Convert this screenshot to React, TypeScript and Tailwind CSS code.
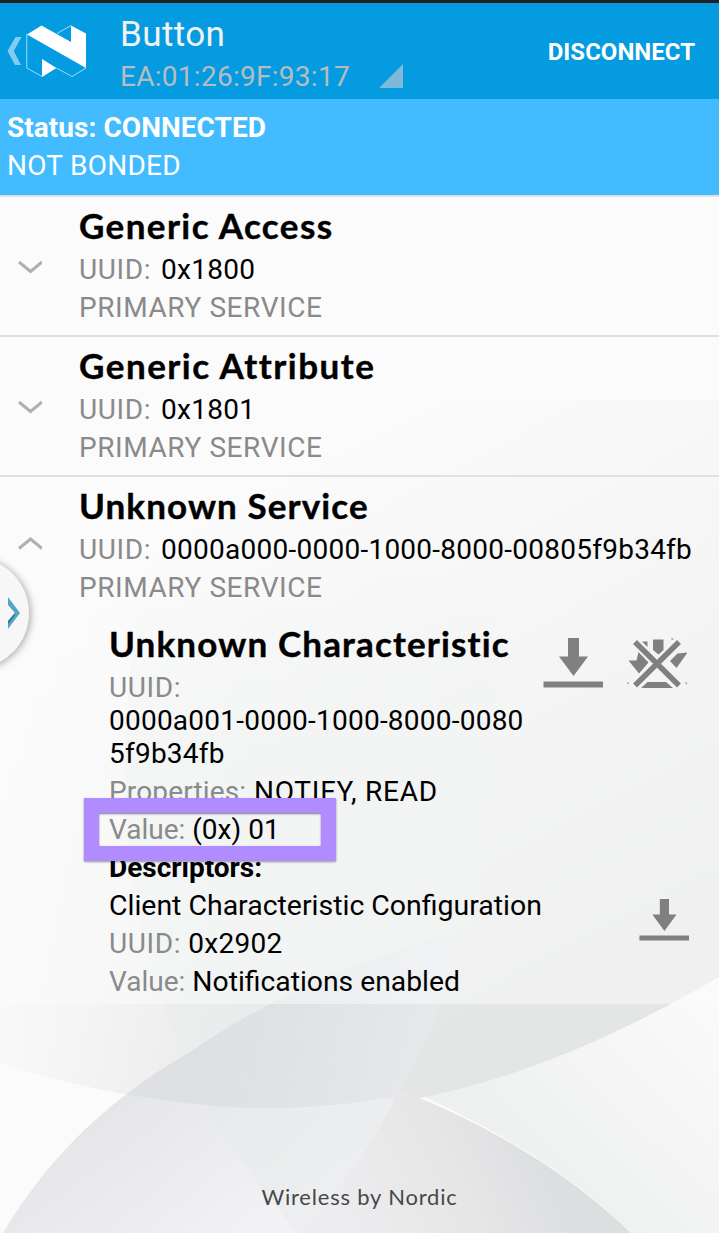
import React from "react";

const Download = ({ className }: { className: string }) => (
  <svg viewBox="0 0 60 50" className={className} fill="#808080" preserveAspectRatio="none">
    <path d="M25 0H36V18.500H45L30.500 38L16 18.500H25ZM0.500 43.500H60V49.500H0.500Z" />
  </svg>
);

const NotifyOff = () => (
  <svg viewBox="0 0 60 50" className="h-[50px] w-[60px]" fill="#808080">
    <path d="M26 1.500H36.500V12L31.500 16.500L26 12ZM11.500 14L21.500 24.500L12 35.500L1.500 22.500H9.500ZM43 23L50.500 15.500L60.500 14.500L49.500 30ZM15 3.500H20.500V9ZM44 0.500H47L45 2ZM14 50L20.500 44H39L46 50ZM0.500 44.500H2.500L0.500 46.500ZM58 44.500H60V46.500Z" />
    <path d="M8 4L52 47.500M52 4L8 47.500" stroke="#808080" strokeWidth="5.500" />
  </svg>
);

const Backdrop = () => (
  <svg className="absolute inset-0 h-[1233px] w-[719px]" viewBox="0 0 719 1233">
    <defs>
      <linearGradient id="sweep" gradientUnits="userSpaceOnUse" x1="320" y1="430" x2="600" y2="960">
        <stop offset="0" stopColor="#e4e5e6" stopOpacity="0" />
        <stop offset="0.45" stopColor="#e4e5e6" stopOpacity="0.5" />
        <stop offset="1" stopColor="#e4e5e5" />
      </linearGradient>
      <linearGradient id="leftLight" gradientUnits="userSpaceOnUse" x1="0" y1="0" x2="260" y2="0">
        <stop offset="0" stopColor="#fbfbfb" stopOpacity="0.85" />
        <stop offset="1" stopColor="#fbfbfb" stopOpacity="0" />
      </linearGradient>
      <linearGradient id="petal" gradientUnits="userSpaceOnUse" x1="0" y1="560" x2="0" y2="1233">
        <stop offset="0" stopColor="#e7eaea" stopOpacity="0" />
        <stop offset="0.3" stopColor="#e7eaea" stopOpacity="0.6" />
        <stop offset="1" stopColor="#edeeef" stopOpacity="0.6" />
      </linearGradient>
      <linearGradient id="dome" gradientUnits="userSpaceOnUse" x1="190" y1="1020" x2="420" y2="1080">
        <stop offset="0" stopColor="#d3d4d9" stopOpacity="0.55" />
        <stop offset="1" stopColor="#e6e8ec" stopOpacity="0.7" />
      </linearGradient>
      <linearGradient id="domeBase" gradientUnits="userSpaceOnUse" x1="140" y1="1080" x2="250" y2="1233">
        <stop offset="0" stopColor="#eeeff1" stopOpacity="0.1" />
        <stop offset="1" stopColor="#f2f2f4" />
      </linearGradient>
      <linearGradient id="hill" gradientUnits="userSpaceOnUse" x1="340" y1="1220" x2="530" y2="1130">
        <stop offset="0" stopColor="#ededef" />
        <stop offset="0.6" stopColor="#e6e6e7" />
        <stop offset="1" stopColor="#dddee0" />
      </linearGradient>
      <linearGradient id="corner" gradientUnits="userSpaceOnUse" x1="719" y1="980" x2="520" y2="1180">
        <stop offset="0" stopColor="#eeefef" stopOpacity="0" />
        <stop offset="1" stopColor="#eeefef" />
      </linearGradient>
    </defs>
    <rect width="719" height="1233" fill="#fbfbfb" />
    <path d="M719 977Q560 1070 425 1097Q560 1160 631 1233H719Z" fill="url(#corner)" />
    <path d="M0 400H719V977Q560 1070 425 1097Q340 1114 250 1108Q110 1100 0 1062Z" fill="url(#sweep)" />
    <path d="M0 477H260V1108Q110 1100 0 1062Z" fill="url(#leftLight)" />
    <path d="M150 540Q105 760 140 920Q170 1080 292 1233H305Q370 1150 400 1090Q470 960 490 830Q500 650 490 540Z" fill="url(#petal)" />
    <path d="M3 1233Q70 1120 190 1052Q300 975 464 930Q445 1015 400 1090Q360 1170 305 1233Z" fill="url(#dome)" />
    <path d="M135 1096Q260 1120 396 1097Q360 1170 305 1233H3Q60 1140 135 1096Z" fill="url(#domeBase)" />
    <path d="M210 1107Q310 1117 396 1097Q360 1170 298 1233Q240 1165 210 1107Z" fill="#e8ebeb" fillOpacity="0.6" />
    <path d="M298 1233Q360 1170 400 1090Q540 1145 631 1233Z" fill="url(#hill)" />
  </svg>
);

const Row = ({ title, tracking, uuid, up }: { title: string; tracking: string; uuid: string; up?: boolean }) => (
  <div className="flex h-[140px] border-t-2 border-[#e0e0e0] pt-2">
    <div className="w-[79px] shrink-0 pl-[18px]">
      <svg className={up ? "mt-[51px] h-3.5 w-6" : "mt-[55px] h-3.5 w-6"} viewBox="0 0 24 14" fill="none" stroke="#b0b0b0" strokeWidth="3">
        <path d={up ? "M1 12.500L12.500 3L24 12.500" : "M1 2L12.500 11.500L24 2"} />
      </svg>
    </div>
    <div className="whitespace-nowrap">
      <h2 className={`mb-1.5 font-[Lato] text-[35px] leading-10 font-bold [-webkit-text-stroke:0.4px_black] ${tracking}`}>{title}</h2>
      <p className="tracking-[0.25px]"><span className="mr-[10px] tracking-[0.6px] text-[#8a8a8a]">UUID:</span>{uuid}</p>
      <p className="tracking-[0.57px] text-[#8a8a8a]">PRIMARY SERVICE</p>
    </div>
  </div>
);

export default function App() {
  return (
    <div className="relative h-[1233px] w-[719px] overflow-hidden font-[Roboto] text-[28px] leading-[38px] text-black">
      <Backdrop />
      <div className="relative flex h-full flex-col">
        <header className="flex h-[99px] shrink-0 border-t-[3px] border-[#222] bg-[#059be0]">
          <svg className="mt-[22px] ml-[7px] h-[54px] w-[82px] shrink-0" viewBox="7 25 82 54">
            <path d="M15.500 37H21.500L13.800 51L21 65H15L7.500 51Z" fill="#80cdf0" />
            <path d="M27 34.500L41.500 25.500L71 42V25.500L86 33.500V68L27 34.500ZM42 59L56.500 68L42 77Z" fill="#fff" />
            <path d="M26.800 34V68L42 76.500M57 33.500L71 25.500M56.500 68L72 76.500L86 68" fill="none" stroke="#a0dcf7" strokeWidth="1" />
          </svg>
          <div className="ml-[31px] pt-[11px] whitespace-nowrap">
            <div className="text-[35px] leading-[42px] tracking-[0.4px] text-[#f2f2f2]">Button</div>
            <div className="flex text-[#b8bcbf]">
              <span className="w-[260px] pt-[2px] tracking-[0.28px]">EA:01:26:9F:93:17</span>
              <svg className="mt-2 h-6 w-6" viewBox="0 0 24 24"><path d="M23 0V24H-1Z" fill="#7fb9d7" /></svg>
            </div>
          </div>
          <div className="mr-6 ml-auto pt-[30px] text-[24px] font-bold text-white">DISCONNECT</div>
        </header>
        <div className="h-24 shrink-0 bg-[#42bbff] pt-[10px] pl-[7px] text-white">
          <div className="font-bold tracking-[0.05px]">Status: CONNECTED</div>
          <div className="tracking-[0.25px]">NOT BONDED</div>
        </div>
        <main className="h-[809px] shrink-0 bg-[#fcfcfc]/50">
          <Row title="Generic Access" tracking="tracking-[1.4px]" uuid="0x1800" />
          <Row title="Generic Attribute" tracking="tracking-[1.5px]" uuid="0x1801" />
          <Row title="Unknown Service" tracking="tracking-[1.1px]" uuid="0000a000-0000-1000-8000-00805f9b34fb" up />
          <section className="flex pt-2 pl-[109px] whitespace-nowrap">
            <div className="w-[434px]">
              <h3 className="mb-2 font-[Lato] text-[35px] leading-10 font-bold tracking-[1.15px] [-webkit-text-stroke:0.4px_black]">Unknown Characteristic</h3>
              <p className="mb-[3px] leading-[33px] tracking-[0.23px]"><span className="tracking-[0.6px] text-[#8a8a8a]">UUID:</span><br />0000a001-0000-1000-8000-0080<br />5f9b34fb</p>
              <p className="tracking-[0.75px]"><span className="tracking-[0.15px] text-[#8a8a8a]">Properties:</span> NOTIFY, READ</p>
              <p><span className="text-[#8a8a8a]">Value:</span> (0x) 01</p>
              <p className="font-bold">Descriptors:</p>
              <p className="text-[28.45px]">Client Characteristic Configuration</p>
              <p className="tracking-[0.25px]"><span className="tracking-[0.6px] text-[#8a8a8a]">UUID:</span> 0x2902</p>
              <p className="text-[28.3px]"><span className="text-[28px] text-[#8a8a8a]">Value:</span> Notifications enabled</p>
            </div>
            <div className="pt-[15px]">
              <div className="flex gap-6"><Download className="h-[50px] w-[60px]" /><NotifyOff /></div>
              <Download className="mt-[211px] ml-24 h-[42px] w-[50px]" />
            </div>
          </section>
        </main>
        <footer className="mt-auto mb-[22px] text-center font-[Lato] text-[22px] leading-7 tracking-[0.8px] text-[#484848]">Wireless by Nordic</footer>
      </div>
      <div className="absolute top-[798px] left-[84px] h-[63px] w-[252px] border-[15px] border-[#b18cff] shadow-[0_1px_2px_rgba(0,0,0,0.4),inset_0_1px_2px_rgba(0,0,0,0.5)]" />
      <div className="absolute top-[557px] -left-[83px] h-[112px] w-[112px] rounded-full bg-[#f7f7f7] shadow-[2px_1px_7px_rgba(0,0,0,0.3)]" />
      <svg className="absolute top-[597px] left-2 h-8 w-3" viewBox="0 0 12 32">
        <path d="M0 0L12 16L0 32V24L7 16L0 8Z" fill="#54a6c6" />
        <path d="M0 24L7 16V18L0 27Z" fill="#2f7390" />
      </svg>
    </div>
  );
}
